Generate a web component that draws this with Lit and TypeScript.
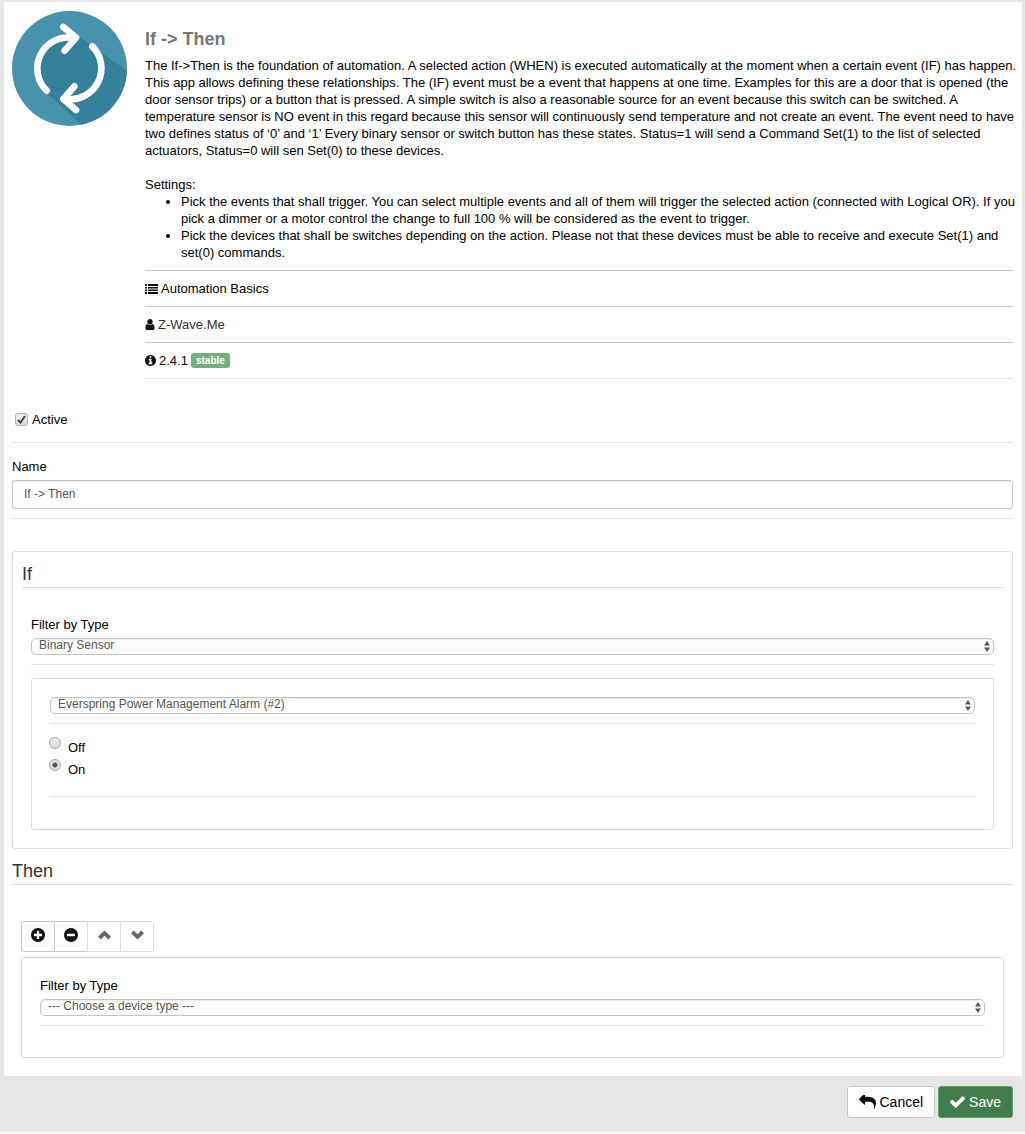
import { LitElement, html, css, svg } from "lit";
import { customElement, property, state } from "lit/decorators.js";

const DISC =
  "q0 209-103 385.5t-279.5 279.5-385.5 103-385.5-103-279.5-279.5-103-385.5 103-385.5 279.5-279.5 385.5-103 385.5 103 279.5 279.5 103 385.5z";

type Glyph = { box: string; w: number; h: number; d: string };

const GLYPHS: Record<string, Glyph> = {
  list: {
    box: "0 0 13 10",
    w: 13,
    h: 10,
    d: "M0 0h2v2H0zM3 0h10v2H3zM0 3h2v1.500H0zM3 3h10v1.500H3zM0 5.500h2v1.500H0zM3 5.500h10v1.500H3zM0 8h2v2H0zM3 8h10v2H3z",
  },
  user: {
    box: "256 128 1280 1536",
    w: 10,
    h: 11,
    d: "M1536 1399q0 109-62.5 187t-150.5 78h-854q-88 0-150.5-78t-62.5-187q0-85 8.5-160.5t31.5-152 58.5-131 94-89 134.5-34.5q131 128 313 128t313-128q76 0 134.5 34.5t94 89 58.5 131 31.5 152 8.5 160.5zm-256-887q0 159-112.5 271.5t-271.5 112.5-271.5-112.5-112.5-271.5 112.5-271.5 271.5-112.5 271.5 112.5 112.5 271.5z",
  },
  info: {
    box: "128 128 1536 1536",
    w: 11,
    h: 11,
    d:
      "M1152 1376v-160q0-14-9-23t-23-9h-96v-512q0-14-9-23t-23-9h-320q-14 0-23 9t-9 23v160q0 14 9 23t23 9h96v320h-96q-14 0-23 9t-9 23v160q0 14 9 23t23 9h448q14 0 23-9t9-23zm-128-896v-160q0-14-9-23t-23-9h-192q-14 0-23 9t-9 23v160q0 14 9 23t23 9h192q14 0 23-9t9-23zm640 416" +
      DISC,
  },
  plus: {
    box: "128 128 1536 1536",
    w: 14,
    h: 14,
    d:
      "M1344 960v-128q0-26-19-45t-45-19h-256v-256q0-26-19-45t-45-19h-128q-26 0-45 19t-19 45v256h-256q-26 0-45 19t-19 45v128q0 26 19 45t45 19h256v256q0 26 19 45t45 19h128q26 0 45-19t19-45v-256h256q26 0 45-19t19-45zm320-64" +
      DISC,
  },
  minus: {
    box: "128 128 1536 1536",
    w: 14,
    h: 14,
    d:
      "M1344 960v-128q0-26-19-45t-45-19h-768q-26 0-45 19t-19 45v128q0 26 19 45t45 19h768q26 0 45-19t19-45zm320-64" +
      DISC,
  },
  up: {
    box: "0 0 13 10",
    w: 13,
    h: 10,
    d: "M6.500 .5L13 6.700L10.300 9.500L6.500 5.800L2.700 9.500L0 6.700z",
  },
  down: {
    box: "0 0 13 10",
    w: 13,
    h: 10,
    d: "M6.500 9.500L0 3.300L2.700 .5L6.500 4.200L10.300 .5L13 3.300z",
  },
  reply: {
    box: "0 192 1792 1482",
    w: 17,
    h: 14,
    d: "M1792 1120q0 166-127 451-3 7-10.5 24t-13.5 30-13 22q-12 17-28 17-15 0-23.5-10t-8.5-25q0-9 2.5-26.5t2.5-23.5q5-68 5-123 0-101-17.5-181t-48.5-138.5-80-101-105.5-69.5-133-42.5-154-21.5-175.5-6h-224v256q0 26-19 45t-45 19-45-19l-512-512q-19-19-19-45t19-45l512-512q19-19 45-19t45 19 19 45v256h224q713 0 875 403 53 134 53 333z",
  },
  check: {
    box: "121 320 1550 1218",
    w: 15,
    h: 12,
    d: "M1671 566q0 40-28 68l-724 724-136 136q-28 28-68 28t-68-28l-136-136-362-362q-28-28-28-68t28-68l136-136q28-28 68-28t68 28l294 295 656-657q28-28 68-28t68 28l136 136q28 28 28 68z",
  },
};

const icon = (name: string) => {
  const g = GLYPHS[name];
  return html`<svg class="icon" aria-hidden="true" width=${g.w} height=${g.h} viewBox=${g.box} fill="currentColor">
    ${svg`<path d=${g.d}></path>`}
  </svg>`;
};

@customElement("select-field")
export class SelectField extends LitElement {
  static styles = css`
    :host {
      display: block;
    }
    .label {
      display: block;
      height: 22px;
      line-height: 17px;
    }
    .wrap {
      position: relative;
      display: flex;
      color: #555;
    }
    .select {
      appearance: none;
      box-sizing: border-box;
      width: 100%;
      height: 17px;
      margin: 0;
      padding: 0 20px 2px 7px;
      border: 1px solid #c4c4c4;
      border-radius: 5px;
      background: #fff;
      box-shadow: inset 0 1px 1px rgba(0, 0, 0, 0.08);
      color: #555;
      font: 12px/13px "Liberation Sans", Arial, sans-serif;
    }
    .arrows {
      position: absolute;
      right: 4px;
      top: 3px;
      pointer-events: none;
    }
    .rule {
      height: 0;
      margin: 9px 0 0;
      border: 0;
      border-top: 1px solid #e5e5e5;
    }
  `;

  @property() label = "";
  @property() name = "";
  @property({ attribute: false }) options: string[] = [];

  render() {
    return html`
      ${this.label ? html`<label class="label" for="field">${this.label}</label>` : null}
      <div class="wrap">
        <select class="select" id="field" name=${this.name} aria-label=${this.label || this.name}>
          ${this.options.map((o) => html`<option>${o}</option>`)}
        </select>
        <svg class="arrows" aria-hidden="true" width="6" height="11" viewBox="0 0 6 11" fill="currentColor">
          <path d="M3 0L6 4.600H0zM3 11L0 6.400h6z"></path>
        </svg>
      </div>
      <hr class="rule" />
    `;
  }
}

@customElement("app-root")
export class AppRoot extends LitElement {
  static styles = css`
    :host {
      display: block;
      min-height: 100vh;
      box-sizing: border-box;
      background: #f7f7f7;
      color: #000;
      font: 13px/17px "Liberation Sans", Arial, sans-serif;
    }
    .page {
      padding: 2px 3px 13px 4px;
      background: #e6e6e6;
    }
    .panel {
      padding: 9px 9px 18px 8px;
      background: #fff;
    }
    .module {
      display: flex;
      align-items: flex-start;
      gap: 18px;
    }
    .logo {
      flex: none;
      display: block;
    }
    .about {
      flex: 1;
      min-width: 0;
      padding-top: 18px;
    }
    .title {
      margin: 0 0 8px;
      color: #777;
      font-size: 18px;
      line-height: 20px;
    }
    .text {
      margin: 0 -9px 17px 0;
    }
    .settings {
      margin: 0;
    }
    .steps {
      margin: 0 -9px 9px 0;
      padding: 0 0 0 36px;
    }
    .meta {
      display: flex;
      align-items: center;
      gap: 3px;
      height: 35px;
      border-top: 1px solid #c8c8c8;
    }
    .meta:last-child {
      border-bottom: 1px solid #e5e5e5;
    }
    .author {
      color: #333;
    }
    .icon {
      flex: none;
      display: block;
      color: #111;
    }
    .badge {
      padding: 0 5px;
      border-radius: 3px;
      background: #76ae7e;
      color: #fff;
      font-size: 10px;
      font-weight: bold;
      line-height: 15px;
    }
    .rule {
      height: 0;
      margin: 0;
      border: 0;
      border-top: 1px solid #e5e5e5;
    }
    .active {
      display: flex;
      align-items: center;
      gap: 4px;
      margin-top: 32px;
      padding: 0 3px 14px;
    }
    .tick {
      position: relative;
      display: grid;
      place-items: center;
    }
    .box {
      appearance: none;
      box-sizing: border-box;
      width: 13px;
      height: 13px;
      margin: 0;
      border: 1px solid #b0b0b0;
      border-radius: 3px;
      background: linear-gradient(#f2f2f2, #dcdcdc);
    }
    .mark {
      position: absolute;
      pointer-events: none;
    }
    .box:not(:checked) + .mark {
      display: none;
    }
    .name {
      display: block;
      padding: 15px 0 5px;
    }
    .input {
      display: block;
      box-sizing: border-box;
      width: 100%;
      height: 29px;
      margin: 0 0 9px;
      padding: 0 11px 2px;
      border: 1px solid #c4c4c4;
      border-radius: 3px;
      box-shadow: inset 0 1px 1px rgba(0, 0, 0, 0.08);
      color: #555;
      font: 12px "Liberation Sans", Arial, sans-serif;
    }
    .card {
      border: 1px solid #dcdcdc;
      border-radius: 3px;
    }
    .if {
      margin-top: 32px;
      padding: 11px 9px 18px;
    }
    .heading {
      margin: 0;
      padding-bottom: 2px;
      border-bottom: 1px solid #dedede;
      color: #333;
      font-size: 18px;
      font-weight: normal;
      line-height: 22px;
    }
    .inner {
      padding: 28px 9px 0;
    }
    .event {
      margin-top: 13px;
      padding: 18px 18px 32px;
    }
    .radios {
      margin: 0;
      padding: 13px 0 15px;
      border: 0;
    }
    .radio {
      display: flex;
      gap: 7px;
      height: 22px;
      line-height: 22px;
    }
    .dot {
      appearance: none;
      box-sizing: border-box;
      width: 12px;
      height: 12px;
      margin: 0 0 0 -1px;
      border: 1px solid #a6a6a6;
      border-radius: 50%;
      background: linear-gradient(#ececec, #dcdcdc);
    }
    .dot:checked {
      background: radial-gradient(circle, #555 0 2px, #e2e2e2 3px);
    }
    .then {
      margin-top: 11px;
    }
    .devices {
      padding: 36px 9px 0;
    }
    .group {
      display: flex;
      margin-bottom: 5px;
    }
    .tool {
      display: flex;
      align-items: center;
      justify-content: center;
      box-sizing: border-box;
      width: 34px;
      height: 31px;
      margin: 0 0 0 -1px;
      padding: 0 0 3px;
      border: 1px solid #c8c8c8;
      background: #fff;
    }
    .tool:first-child {
      margin-left: 0;
      border-radius: 3px 0 0 3px;
    }
    .tool:last-child {
      border-radius: 0 3px 3px 0;
    }
    .tool:disabled {
      border-color: #dcdcdc;
    }
    .tool:disabled .icon {
      color: #666;
    }
    .device {
      padding: 19px 18px 31px;
    }
    .footer {
      display: flex;
      justify-content: flex-end;
      gap: 3px;
      padding: 10px 9px 0;
    }
    .btn {
      display: flex;
      align-items: center;
      gap: 4px;
      box-sizing: border-box;
      height: 32px;
      margin: 0;
      padding: 0 11px;
      border: 1px solid #c8c8c8;
      border-radius: 3px;
      background: #fff;
      color: #000;
      font: 14px "Liberation Sans", Arial, sans-serif;
    }
    .cancel {
      gap: 3px;
    }
    .save {
      border-color: #5fa56b;
      background: #427c4d;
      color: #fff;
    }
    .save .icon {
      color: #fff;
    }
  `;

  @state() private status = "On";

  render() {
    return html`
      <form class="page" @submit=${(e: Event) => e.preventDefault()}>
        <main class="panel">
          <section class="module">
            <svg class="logo" aria-hidden="true" width="115" height="115" viewBox="36 33 345 345">
              <defs>
                <clipPath id="disc"><circle cx="208.500" cy="205.500" r="172.500"></circle></clipPath>
              </defs>
              <g clip-path="url(#disc)">
                <path fill="#4793ad" d="M36 33h345v345H36z"></path>
                <circle cx="209" cy="206" r="94" fill="#35809b"></circle>
                <path fill="#35809b" d="M236 108L420 240V420H295L137 276z"></path>
              </g>
              <g fill="none" stroke="#fff" stroke-width="20" stroke-linecap="round" stroke-linejoin="round">
                <path d="M140 272A93 93 0 0 1 215 113"></path>
                <path d="M190 81L228 113L194 152"></path>
                <path d="M277 139A93 93 0 0 1 200 297"></path>
                <path d="M223 259L190 297L228 330"></path>
              </g>
            </svg>
            <div class="about">
              <h4 class="title">If -&gt; Then</h4>
              <p class="text">
                The If-&gt;Then is the foundation of automation. A selected action (WHEN) is executed automatically at
                the moment when a certain event (IF) has happen.<br />
                This app allows defining these relationships. The (IF) event must be a event that happens at one time.
                Examples for this are a door that is opened (the<br />
                door sensor trips) or a button that is pressed. A simple switch is also a reasonable source for an event
                because this switch can be switched. A<br />
                temperature sensor is NO event in this regard because this sensor will continuously send temperature and
                not create an event. The event need to have<br />
                two defines status of ‘0’ and ‘1’ Every binary sensor or switch button has these states. Status=1 will
                send a Command Set(1) to the list of selected<br />
                actuators, Status=0 will sen Set(0) to these devices.
              </p>
              <p class="settings">Settings:</p>
              <ul class="steps">
                <li>
                  Pick the events that shall trigger. You can select multiple events and all of them will trigger the
                  selected action (connected with Logical OR). If you<br />
                  pick a dimmer or a motor control the change to full 100 % will be considered as the event to trigger.
                </li>
                <li>
                  Pick the devices that shall be switches depending on the action. Please not that these devices must be
                  able to receive and execute Set(1) and<br />
                  set(0) commands.
                </li>
              </ul>
              <div class="meta">${icon("list")}<span>Automation Basics</span></div>
              <div class="meta">${icon("user")}<span class="author">Z-Wave.Me</span></div>
              <div class="meta">${icon("info")}<span>2.4.1</span><span class="badge">stable</span></div>
            </div>
          </section>

          <div class="active">
            <span class="tick">
              <input class="box" id="active" type="checkbox" checked />
              <svg class="mark" aria-hidden="true" width="9" height="9" viewBox="0 0 9 9">
                <path d="M1 5l2.500 2.500L8 1" fill="none" stroke="#444" stroke-width="2"></path>
              </svg>
            </span>
            <label for="active">Active</label>
          </div>
          <hr class="rule" />

          <label class="name" for="name">Name</label>
          <input class="input" id="name" type="text" value="If -&gt; Then" />
          <hr class="rule" />

          <section class="card if">
            <h3 class="heading">If</h3>
            <div class="inner">
              <select-field label="Filter by Type" name="Filter by Type" .options=${["Binary Sensor"]}></select-field>
              <div class="card event">
                <select-field name="Device" .options=${["Everspring Power Management Alarm (#2)"]}></select-field>
                <fieldset class="radios" aria-label="Status">
                  ${["Off", "On"].map(
                    (s) => html`<div class="radio">
                      <input
                        class="dot"
                        type="radio"
                        name="status"
                        id="status-${s}"
                        .checked=${this.status === s}
                        @change=${() => (this.status = s)}
                      />
                      <label for="status-${s}">${s}</label>
                    </div>`
                  )}
                </fieldset>
                <hr class="rule" />
              </div>
            </div>
          </section>

          <section class="then">
            <h3 class="heading">Then</h3>
            <div class="devices">
              <div class="group">
                <button class="tool" type="button" aria-label="Add">${icon("plus")}</button>
                <button class="tool" type="button" aria-label="Remove">${icon("minus")}</button>
                <button class="tool" type="button" aria-label="Move up" disabled>${icon("up")}</button>
                <button class="tool" type="button" aria-label="Move down" disabled>${icon("down")}</button>
              </div>
              <div class="card device">
                <select-field
                  label="Filter by Type"
                  name="Filter by Type"
                  .options=${["--- Choose a device type ---"]}
                ></select-field>
              </div>
            </div>
          </section>
        </main>
        <footer class="footer">
          <button class="btn cancel" type="button">${icon("reply")}<span>Cancel</span></button>
          <button class="btn save" type="submit">${icon("check")}<span>Save</span></button>
        </footer>
      </form>
    `;
  }
}
